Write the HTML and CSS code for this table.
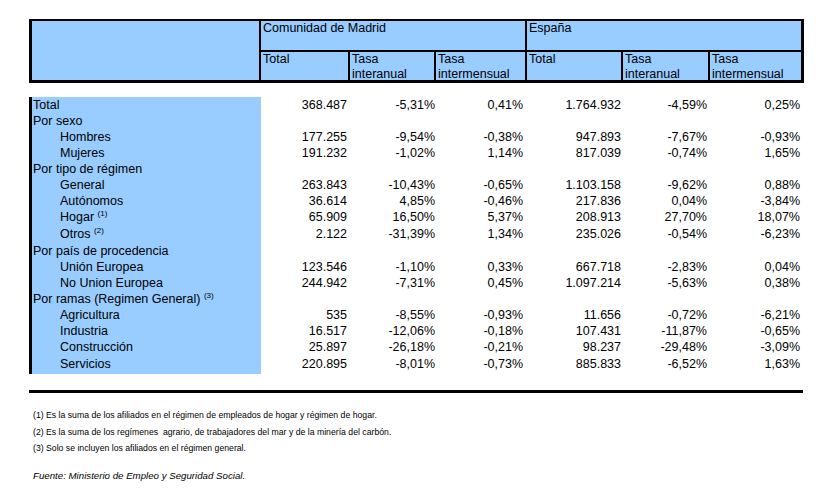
FILE: index.html
```html
<!DOCTYPE html>
<html lang="es">
<head>
<meta charset="utf-8">
<title>Afiliados</title>
<link rel="stylesheet" href="styles.css">
</head>
<body>
<div class="page">
  <div class="head">
    <div class="hc blank"></div>
    <div class="hc span3">Comunidad de Madrid</div>
    <div class="hc span3">España</div>
    <div class="hc">Total</div>
    <div class="hc">Tasa<br>interanual</div>
    <div class="hc">Tasa<br>intermensual</div>
    <div class="hc">Total</div>
    <div class="hc">Tasa<br>interanual</div>
    <div class="hc">Tasa<br>intermensual</div>
  </div>

  <div class="data">
    <div class="row"><div class="lbl">Total</div><div class="n">368.487</div><div class="n">-5,31%</div><div class="n">0,41%</div><div class="n">1.764.932</div><div class="n">-4,59%</div><div class="n">0,25%</div></div>
    <div class="row"><div class="lbl">Por sexo</div><div class="n"></div><div class="n"></div><div class="n"></div><div class="n"></div><div class="n"></div><div class="n"></div></div>
    <div class="row"><div class="lbl sub">Hombres</div><div class="n">177.255</div><div class="n">-9,54%</div><div class="n">-0,38%</div><div class="n">947.893</div><div class="n">-7,67%</div><div class="n">-0,93%</div></div>
    <div class="row"><div class="lbl sub">Mujeres</div><div class="n">191.232</div><div class="n">-1,02%</div><div class="n">1,14%</div><div class="n">817.039</div><div class="n">-0,74%</div><div class="n">1,65%</div></div>
    <div class="row"><div class="lbl">Por tipo de régimen</div><div class="n"></div><div class="n"></div><div class="n"></div><div class="n"></div><div class="n"></div><div class="n"></div></div>
    <div class="row"><div class="lbl sub">General</div><div class="n">263.843</div><div class="n">-10,43%</div><div class="n">-0,65%</div><div class="n">1.103.158</div><div class="n">-9,62%</div><div class="n">0,88%</div></div>
    <div class="row"><div class="lbl sub">Autónomos</div><div class="n">36.614</div><div class="n">4,85%</div><div class="n">-0,46%</div><div class="n">217.836</div><div class="n">0,04%</div><div class="n">-3,84%</div></div>
    <div class="row tall"><div class="lbl sub">Hogar <sup>(1)</sup></div><div class="n">65.909</div><div class="n">16,50%</div><div class="n">5,37%</div><div class="n">208.913</div><div class="n">27,70%</div><div class="n">18,07%</div></div>
    <div class="row tall"><div class="lbl sub">Otros <sup>(2)</sup></div><div class="n">2.122</div><div class="n">-31,39%</div><div class="n">1,34%</div><div class="n">235.026</div><div class="n">-0,54%</div><div class="n">-6,23%</div></div>
    <div class="row"><div class="lbl">Por país de procedencia</div><div class="n"></div><div class="n"></div><div class="n"></div><div class="n"></div><div class="n"></div><div class="n"></div></div>
    <div class="row"><div class="lbl sub">Unión Europea</div><div class="n">123.546</div><div class="n">-1,10%</div><div class="n">0,33%</div><div class="n">667.718</div><div class="n">-2,83%</div><div class="n">0,04%</div></div>
    <div class="row"><div class="lbl sub">No Union Europea</div><div class="n">244.942</div><div class="n">-7,31%</div><div class="n">0,45%</div><div class="n">1.097.214</div><div class="n">-5,63%</div><div class="n">0,38%</div></div>
    <div class="row"><div class="lbl">Por ramas (Regimen General) <sup>(3)</sup></div><div class="n"></div><div class="n"></div><div class="n"></div><div class="n"></div><div class="n"></div><div class="n"></div></div>
    <div class="row"><div class="lbl sub">Agricultura</div><div class="n">535</div><div class="n">-8,55%</div><div class="n">-0,93%</div><div class="n">11.656</div><div class="n">-0,72%</div><div class="n">-6,21%</div></div>
    <div class="row"><div class="lbl sub">Industria</div><div class="n">16.517</div><div class="n">-12,06%</div><div class="n">-0,18%</div><div class="n">107.431</div><div class="n">-11,87%</div><div class="n">-0,65%</div></div>
    <div class="row"><div class="lbl sub">Construcción</div><div class="n">25.897</div><div class="n">-26,18%</div><div class="n">-0,21%</div><div class="n">98.237</div><div class="n">-29,48%</div><div class="n">-3,09%</div></div>
    <div class="row last"><div class="lbl sub">Servicios</div><div class="n">220.895</div><div class="n">-8,01%</div><div class="n">-0,73%</div><div class="n">885.833</div><div class="n">-6,52%</div><div class="n">1,63%</div></div>
  </div>

  <div class="rule"></div>

  <div class="notes">
    <p>(1) Es la suma de los afiliados en el régimen de empleados de hogar y régimen de hogar.</p>
    <p>(2) Es la suma de los regímenes &nbsp;agrario, de trabajadores del mar y de la minería del carbón.</p>
    <p>(3) Solo se incluyen los afiliados en el régimen general.</p>
    <p class="src">Fuente: Ministerio de Empleo y Seguridad Social.</p>
  </div>
</div>
</body>
</html>
```

FILE: styles.css
```css
html, body {
  margin: 0;
  background: #fff;
}

body {
  font-family: "Liberation Sans", Arial, sans-serif;
  font-size: 12.5px;
  color: #000;
}

.page {
  padding: 19px 0 0 29px;
}

.head {
  display: grid;
  width: 775px;
  box-sizing: border-box;
  background: #000;
  padding: 2px 3px 3px 3px;
  gap: 2px;
  grid-template-columns: 227px 87px 84px 89px 94px 85px 91px;
  grid-template-rows: 29px 28px;
}

.hc {
  background: #99ccff;
  padding: 0 2px;
  line-height: 15px;
}

.hc.blank {
  grid-row: span 2;
}

.hc.span3 {
  grid-column: span 3;
}

.data {
  margin-top: 14px;
}

.row {
  display: grid;
  grid-template-columns: 232px 86px 88px 88px 98px 86px 93px;
  height: 16px;
  line-height: 16px;
}

.row.tall {
  height: 17px;
  line-height: 17px;
}

.row.last {
  height: 19px;
  line-height: 19px;
}

.lbl {
  background: #99ccff;
  border-left: 3px solid #000;
  padding-left: 1px;
  white-space: nowrap;
}

.lbl.sub {
  padding-left: 28px;
}

.n {
  text-align: right;
  white-space: nowrap;
}

sup {
  font-size: 8px;
  line-height: 0;
  vertical-align: 5px;
}

.rule {
  width: 774px;
  height: 3px;
  background: #000;
  margin-top: 16px;
}

.notes {
  padding-left: 4px;
  padding-top: 14px;
}

.notes p {
  margin: 0;
  font-size: 8.7px;
  line-height: 16.5px;
}

.notes p.src {
  font-style: italic;
  font-size: 9.7px;
  margin-top: 11px;
}
```
